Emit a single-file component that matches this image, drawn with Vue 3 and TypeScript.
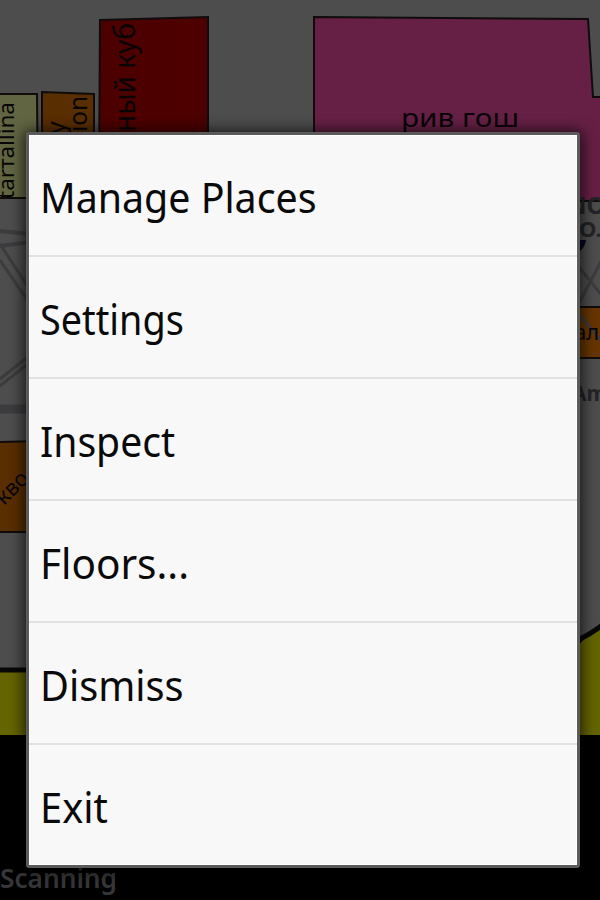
<script setup lang="ts">
import { ref } from 'vue'

interface MenuItem {
  id: string
  label: string
  stretch: number
}

const items: MenuItem[] = [
  { id: 'places', label: 'Manage Places', stretch: 0.959 },
  { id: 'settings', label: 'Settings', stretch: 0.922 },
  { id: 'inspect', label: 'Inspect', stretch: 0.953 },
  { id: 'floors', label: 'Floors...', stretch: 0.987 },
  { id: 'dismiss', label: 'Dismiss', stretch: 0.968 },
  { id: 'exit', label: 'Exit', stretch: 0.972 },
]

const selected = ref<string | null>(null)
</script>

<template>
  <main class="screen">
    <svg class="map" width="600" height="900" viewBox="0 0 600 900" aria-hidden="true">
      <rect width="600" height="900" fill="#4d4d4d" />

      <!-- corridors and walkways -->
      <g fill="none" stroke="#3c3b3e" stroke-width="4">
        <path d="M0 231 L30 234 M0 246 L30 242" />
        <path d="M0 244 L34 296 M0 260 L30 304" stroke-width="3" />
        <path d="M0 379 L34 352 M0 386 L34 359" stroke-width="3" />
        <path d="M0 409 H30" stroke-width="9" />
        <path d="M575 262 L604 298 M578 305 L604 256" stroke-width="3" />
      </g>

      <!-- shops -->
      <g stroke="#100c0c" stroke-width="2">
        <path d="M-4 94 L37 94 L38 198 H-4 Z" fill="#626542" />
        <path d="M42 92 L94 94 V180 H42 Z" fill="#592e00" />
        <path d="M100 20 L208 17 V180 H99 Z" fill="#4d0000" />
        <path d="M314 17 L588 19 L593 97 H606 V201 H314 Z" fill="#662045" />
        <path d="M-4 442 L40 441 V532 H-4 Z" fill="#592e00" />
        <path d="M570 307 H606 V358 H570 Z" fill="#663500" />
      </g>
      <path d="M572 306 L604 344" stroke="#3c3b3e" stroke-width="3" />
      <path d="M572 240 H586 Q585 249 576 254 Z" fill="#050525" />

      <!-- outer wall and lawn -->
      <path d="M0 670 H550 L582 638 Q592 633 604 624 V735 H0 Z" fill="#646400" />
      <path d="M0 670 H550 L582 638 Q592 633 604 624" fill="none" stroke="#080808" stroke-width="5" />
      <rect y="735" width="600" height="165" fill="#000" />

      <g class="labels">
        <text x="401" y="127" font-size="26" textLength="118" lengthAdjust="spacingAndGlyphs">рив гош</text>
        <text transform="translate(135 132) rotate(-90)" font-size="29" textLength="109" lengthAdjust="spacingAndGlyphs">ный куб</text>
        <text transform="translate(14 199) rotate(-90)" font-size="21" textLength="97" lengthAdjust="spacingAndGlyphs">tarтаllina</text>
        <text transform="translate(87 132) rotate(-90)" font-size="25" textLength="36" lengthAdjust="spacingAndGlyphs">ion</text>
        <text transform="translate(65 134) rotate(-90)" font-size="25">y</text>
        <text transform="translate(4 506) rotate(-45)" font-size="22">кво</text>
        <text x="574" y="340" font-size="22">ал</text>
        <text x="567" y="214" font-size="24" class="faint">NO</text>
        <text x="579" y="237" font-size="22" class="faint">O.</text>
        <text x="572" y="401" font-size="21" class="faint">Am</text>
      </g>
      <text class="status" x="0" y="888" font-size="27" textLength="117" lengthAdjust="spacingAndGlyphs">Scanning</text>
    </svg>

    <ul class="menu" role="menu">
      <li
        v-for="item in items"
        :key="item.id"
        class="item"
        role="menuitem"
        @click="selected = item.id"
      >
        <span class="label" :style="{ transform: `scaleX(${item.stretch})` }">{{ item.label }}</span>
      </li>
    </ul>
  </main>
</template>

<style>
body {
  margin: 0;
  background: #000;
}
</style>

<style scoped>
.screen {
  display: grid;
  width: 600px;
  height: 900px;
  overflow: hidden;
  font-family: "Noto Sans", "Open Sans", sans-serif;
}

.map,
.menu {
  grid-area: 1 / 1;
}

.map {
  display: block;
}

.labels {
  fill: #080507;
}

.faint {
  fill: #242426;
  font-weight: 700;
}

.status {
  fill: #373739;
  font-weight: 600;
}

.menu {
  box-sizing: border-box;
  z-index: 1;
  width: 554px;
  height: 736px;
  margin: 132px 0 0 26px;
  padding: 0;
  list-style: none;
  background: #f8f8f8;
  border: 3px solid #5b5b5c;
  border-radius: 3px;
  box-shadow: 0 1px 14px 3px rgba(0, 0, 0, 0.65), inset 0 0 0 1px #fff;
}

.item {
  box-sizing: border-box;
  display: flex;
  align-items: center;
  height: 122px;
  padding: 4px 11px 0;
  border-bottom: 2px solid #e2e2e2;
  cursor: pointer;
}

.item:last-child {
  padding-top: 2px;
  border-bottom: 0;
}

.label {
  color: #0a0a0a;
  font-size: 41px;
  line-height: 56px;
  white-space: nowrap;
  transform-origin: left center;
}
</style>
